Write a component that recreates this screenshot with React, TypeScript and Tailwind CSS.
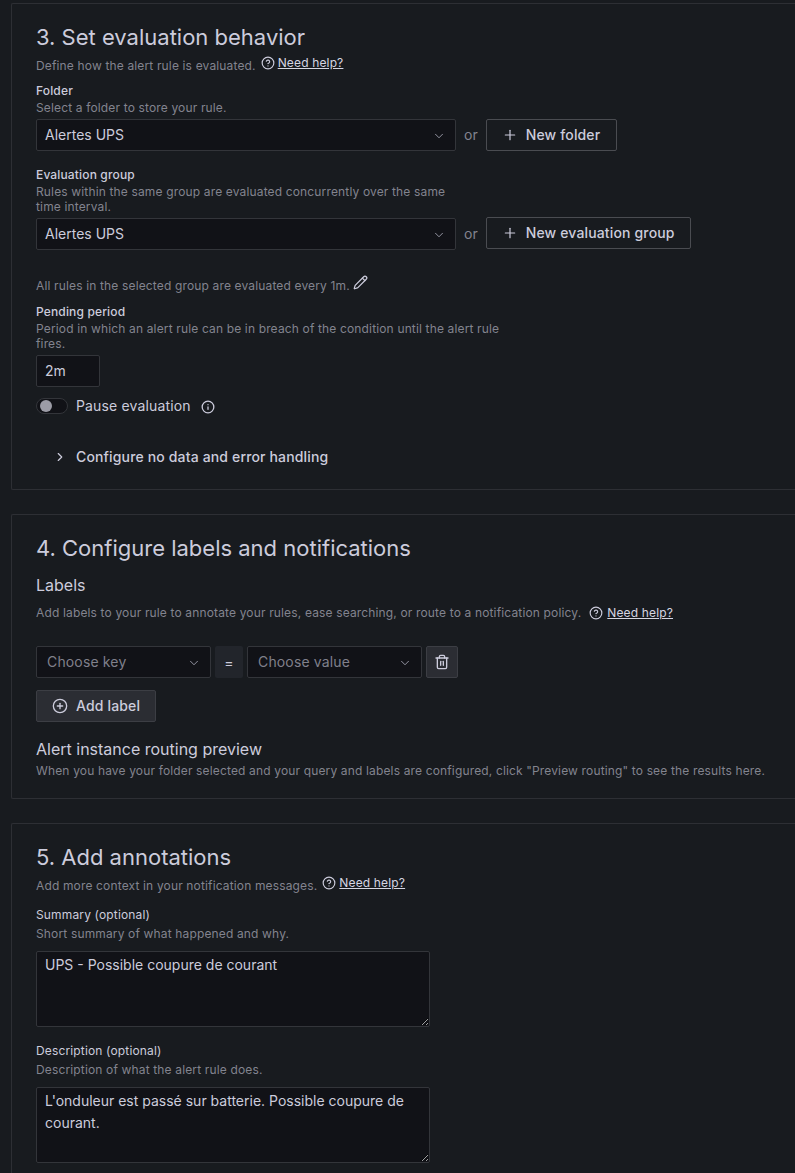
import { ChevronDown, ChevronRight, CircleHelp, CirclePlus, Info, Pencil, Plus, Trash2 } from 'lucide-react';

function Section({ h, className = '', children }: any) {
  return (
    <section className={`border border-r-0 border-[#2d2f34] rounded-l-[2px] pl-[24px] pt-[18px] ${h} ${className}`}>
      {children}
    </section>
  );
}

function Title({ children }: any) {
  return <h2 className="text-[22px] leading-[30px] text-[#ccccdc] font-normal">{children}</h2>;
}

function Help({ text, inline = false, className = '' }: any) {
  return (
    <div className={`flex items-start text-[12px] leading-[16px] tracking-[0.15px] ${className}`}>
      <span className="text-[#ccccdc]/60">{text}</span>
      <CircleHelp size={14} strokeWidth={2} className={inline ? 'ml-[8px] mt-[1px] text-[#ccccdc]' : 'ml-[5px] mt-[-2px] text-[#ccccdc]'} />
      <a className={inline ? 'ml-[4px] text-[#d5d5e2] underline' : 'ml-[3px] mt-[-3px] text-[#d5d5e2] underline'}>Need help?</a>
    </div>
  );
}

function Label({ title, desc, medium = true, gap = 'mt-[1px]', className = '' }: any) {
  return (
    <div className={`text-[12px] tracking-[0.15px] ${className}`}>
      <div className={`leading-[16px] text-[#ccccdc] ${medium ? 'font-medium' : ''}`}>{title}</div>
      <div className={`leading-[15px] text-[#ccccdc]/60 ${gap}`}>{desc}</div>
    </div>
  );
}

function Select({ value, placeholder, w }: any) {
  return (
    <div className={`${w} h-[32px] flex items-center justify-between bg-[#111217] border border-[#33353a] rounded-[2px] text-[14px] shrink-0`}>
      <span className={placeholder ? 'pl-[10px] mb-[2px] tracking-[0.15px] text-[#ccccdc]/60' : 'pl-[8px] mb-[2px] text-[#ccccdc]'}>{value}</span>
      <ChevronDown size={14} strokeWidth={1.7} className="mr-[9px] mt-[1px] text-[#ccccdc]/70" />
    </div>
  );
}

function OutlineButton({ children, w, className = '' }: any) {
  return (
    <button className={`${w} h-[32px] flex items-center border border-[#4a4c51] rounded-[2px] pl-[15px] text-[14px] tracking-[0.15px] font-medium text-[#ccccdc] ${className}`}>
      <Plus size={16} strokeWidth={1.8} className="mr-[8px]" />
      <span className="mb-[2px]">{children}</span>
    </button>
  );
}

function Area({ value }: any) {
  return (
    <textarea
      readOnly
      defaultValue={value}
      className="block w-[394px] h-[76px] bg-[#111217] border border-[#33353a] rounded-[2px] px-[8px] pt-[2px] text-[14px] leading-[22px] text-[#ccccdc] outline-none"
    />
  );
}

export default function App() {
  return (
    <div className="w-[795px] h-[1173px] overflow-hidden bg-[#181b1f] pt-[3px] pl-[11px] font-['Inter',sans-serif]">
      {/* section 3 */}
      <Section h="h-[487px]">
        <Title>3. Set evaluation behavior</Title>
        <Help text="Define how the alert rule is evaluated." className="mt-[6px]" />
        <Label title="Folder" desc="Select a folder to store your rule." className="mt-[9px]" />
        <div className="flex items-center mt-[4px]">
          <Select value="Alertes UPS" w="w-[420px]" />
          <span className="mx-[8px] mb-[2px] text-[14px] text-[#ccccdc]/60">or</span>
          <OutlineButton w="w-[131px]">New folder</OutlineButton>
        </div>
        <Label
          title="Evaluation group"
          desc={<>Rules within the same group are evaluated concurrently over the same<br />time interval.</>}
          className="mt-[16px]"
        />
        <div className="flex items-center mt-[4px]">
          <Select value="Alertes UPS" w="w-[420px]" />
          <span className="mx-[8px] mb-[2px] text-[14px] text-[#ccccdc]/60">or</span>
          <OutlineButton w="w-[205px]" className="mt-[-2px]">New evaluation group</OutlineButton>
        </div>
        <div className="flex items-start mt-[28px] text-[12px] leading-[16px] tracking-[0.15px] text-[#ccccdc]/60">
          All rules in the selected group are evaluated every 1m.
          <Pencil size={15} strokeWidth={2} className="ml-[3px] mt-[-3px] text-[#ccccdc]" />
        </div>
        <Label
          title="Pending period"
          desc={<>Period in which an alert rule can be in breach of the condition until the alert rule<br />fires.</>}
          className="mt-[10px]"
        />
        <div className="mt-[4px] w-[64px] h-[32px] flex items-center pl-[8px] bg-[#111217] border border-[#33353a] rounded-[2px] text-[14px] text-[#ccccdc]">
          <span className="mb-[2px]">2m</span>
        </div>
        <div className="flex items-center mt-[11px] h-[16px]">
          <div className="w-[32px] h-[16px] flex items-center pl-[3px] bg-[#111217] border border-[#33353a] rounded-full">
            <div className="w-[12px] h-[12px] rounded-full bg-[#9c9ca6]" />
          </div>
          <span className="ml-[8px] mb-[2px] text-[14px] tracking-[0.15px] text-[#ccccdc]">Pause evaluation</span>
          <Info size={14} strokeWidth={2.2} className="ml-[10px] mt-[2px] text-[#ccccdc]" />
        </div>
        <div className="flex items-center mt-[32px] ml-[16px] text-[14px] tracking-[0.15px] font-medium text-[#ccccdc]">
          <ChevronRight size={14} strokeWidth={2} className="mx-[1px] mr-[9px]" />
          Configure no data and error handling
        </div>
      </Section>

      {/* section 4 */}
      <Section h="h-[285px]" className="mt-[24px]">
        <Title>4. Configure labels and notifications</Title>
        <div className="mt-[12px] text-[16px] leading-[20px] text-[#ccccdc]">Labels</div>
        <Help
          text="Add labels to your rule to annotate your rules, ease searching, or route to a notification policy."
          inline
          className="mt-[10px]"
        />
        <div className="flex items-center gap-[4px] mt-[25px]">
          <Select value="Choose key" placeholder w="w-[175px]" />
          <div className="w-[28px] h-[32px] flex items-center justify-center bg-[#22252b] rounded-[2px] text-[14px] text-[#ccccdc]">=</div>
          <Select value="Choose value" placeholder w="w-[175px]" />
          <button className="w-[32px] h-[32px] flex items-center justify-center bg-[#2b2d33] border border-[#3c3e44] rounded-[2px] text-[#ccccdc]">
            <Trash2 size={16} strokeWidth={2} />
          </button>
        </div>
        <button className="mt-[12px] w-[120px] h-[32px] flex items-center pl-[15px] bg-[#2b2d33] border border-[#3c3e44] rounded-[2px] text-[14px] tracking-[0.15px] font-medium text-[#ccccdc]">
          <CirclePlus size={16} strokeWidth={2} className="mr-[8px]" />
          <span className="mb-[2px]">Add label</span>
        </button>
        <div className="mt-[17px] text-[16px] leading-[20px] text-[#ccccdc]">Alert instance routing preview</div>
        <div className="mt-[4px] text-[12px] leading-[16px] tracking-[0.15px] text-[#ccccdc]/60">
          When you have your folder selected and your query and labels are configured, click "Preview routing" to see the results here.
        </div>
      </Section>

      {/* section 5 */}
      <Section h="h-[400px]" className="mt-[24px]">
        <Title>5. Add annotations</Title>
        <Help text="Add more context in your notification messages." className="mt-[6px]" />
        <Label title="Summary (optional)" desc="Short summary of what happened and why." medium={false} gap="mt-[3px]" className="mt-[13px]" />
        <div className="mt-[10px]">
          <Area value="UPS - Possible coupure de courant" />
        </div>
        <Label title="Description (optional)" desc="Description of what the alert rule does." medium={false} gap="mt-[3px]" className="mt-[16px]" />
        <div className="mt-[10px]">
          <Area value="L'onduleur est passé sur batterie. Possible coupure de courant." />
        </div>
      </Section>
    </div>
  );
}
